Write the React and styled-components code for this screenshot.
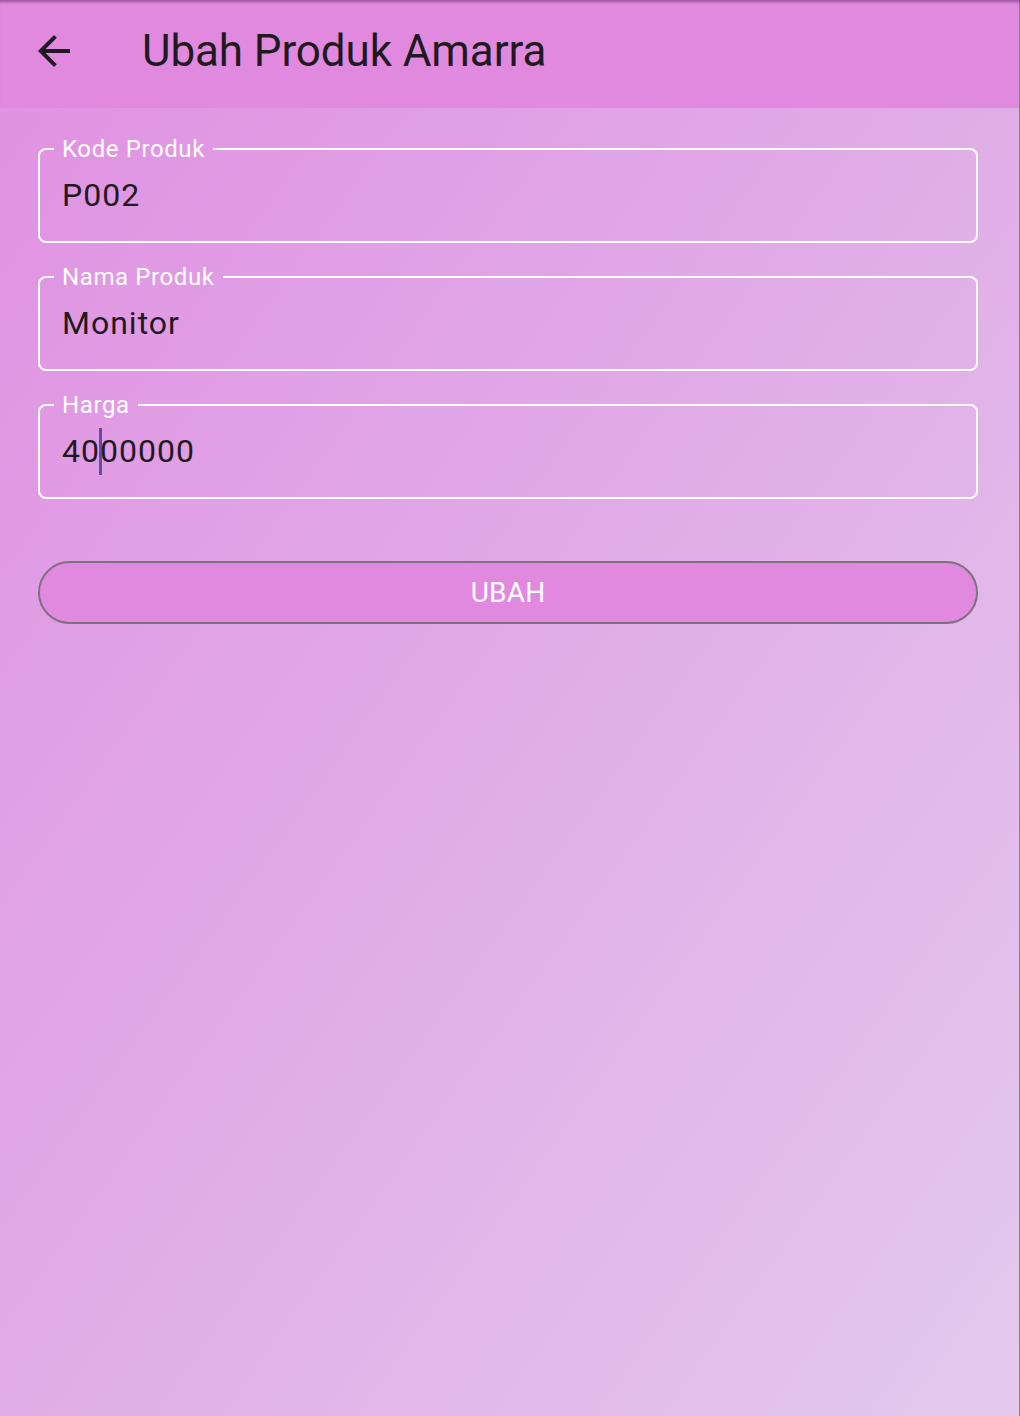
import React from 'react';
import styled, { createGlobalStyle } from 'styled-components';

const fields = [
  { label: 'Kode Produk', value: 'P002' },
  { label: 'Nama Produk', value: 'Monitor' },
  { label: 'Harga', value: '4000000', caretAt: 2 },
];

const App = () => {
  return (
    <Page>
      <GlobalStyle />
      <AppBar>
        <BackButton aria-label="Kembali">
          <svg width="48" height="48" viewBox="0 0 24 24">
            <path
              d="M20 11H7.83l5.59-5.59L12 4l-8 8 8 8 1.41-1.41L7.83 13H20v-2z"
              fill="#1f1a20"
            />
          </svg>
        </BackButton>
        <Title>Ubah Produk Amarra</Title>
      </AppBar>
      <Form>
        {fields.map((f) => (
          <Field key={f.label}>
            <Label>{f.label}</Label>
            <Value>
              {f.caretAt == null ? (
                f.value
              ) : (
                <>
                  {f.value.slice(0, f.caretAt)}
                  <Caret />
                  {f.value.slice(f.caretAt)}
                </>
              )}
            </Value>
          </Field>
        ))}
        <SubmitButton type="button">UBAH</SubmitButton>
      </Form>
    </Page>
  );
};

// ========== STYLED COMPONENTS ========== //
const GlobalStyle = createGlobalStyle`
  html, body {
    margin: 0;
    padding: 0;
  }
  body {
    font-family: Roboto, "Noto Sans", sans-serif;
  }
`;

const Page = styled.div`
  min-height: 100vh;
  display: flex;
  flex-direction: column;
  background: linear-gradient(to bottom right, #e090e2 0%, #e1afe8 55%, #e3caed 100%);
  box-shadow: inset -1px 0 0 #8a7d8c;
`;

const AppBar = styled.header`
  height: 108px;
  box-sizing: border-box;
  padding: 0 0 6px 30px;
  display: flex;
  align-items: center;
  background: #e189df;
  box-shadow: inset 0 4px 3px -2px rgba(70, 20, 70, 0.45), inset -1px 0 0 #8a7d8c;
`;

const BackButton = styled.button`
  width: 48px;
  height: 48px;
  padding: 0;
  border: none;
  background: none;
  display: flex;
  align-items: center;
  justify-content: center;
`;

const Title = styled.h1`
  margin: 0 0 0 64px;
  font-size: 44px;
  font-weight: 400;
  letter-spacing: -0.1px;
  color: #1f1a20;
  line-height: 1;
`;

const Form = styled.main`
  display: flex;
  flex-direction: column;
  gap: 22px;
  padding: 29px 42px 0 38px;
`;

const Field = styled.fieldset`
  margin: 0;
  padding: 0 14px 20px;
  border: 2px solid #ffffff;
  border-radius: 8px;
  min-width: 0;
`;

const Label = styled.legend`
  padding: 0 8px;
  font-size: 24px;
  line-height: 24px;
  letter-spacing: 0.6px;
  color: #ffffff;
`;

const Value = styled.div`
  margin-top: 8px;
  height: 52px;
  padding-left: 8px;
  display: flex;
  align-items: center;
  font-size: 32px;
  letter-spacing: 1px;
  color: #1f1a20;
`;

const Caret = styled.span`
  display: inline-block;
  width: 3px;
  height: 47px;
  margin: 0 -2px 0 -1px;
  background: #5e4fa2;
`;

const SubmitButton = styled.button`
  margin-top: 40px;
  height: 63px;
  border: 2px solid #7d717e;
  border-radius: 32px;
  background: #e189df;
  color: #ffffff;
  font-family: Roboto, "Noto Sans", sans-serif;
  font-size: 28px;
  font-weight: 400;
  letter-spacing: 0.2px;
`;

export default App;
